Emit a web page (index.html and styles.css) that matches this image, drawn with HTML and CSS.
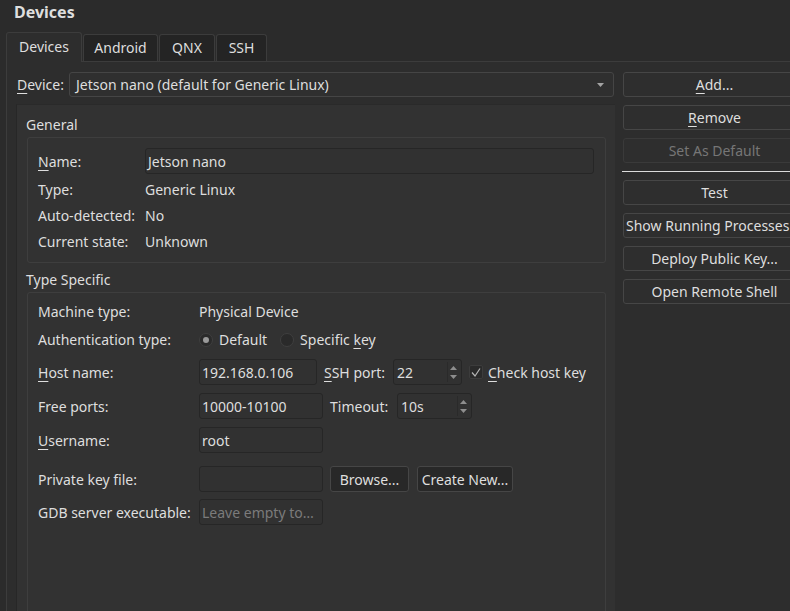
FILE: index.html
```html
<!DOCTYPE html>
<html>
<head>
<meta charset="utf-8">
<title>Devices</title>
<link rel="stylesheet" href="styles.css">
</head>
<body>
<div class="win">
  <div class="title">Devices</div>
  <div class="tabs">
    <div class="tab active t1">Devices</div>
    <div class="tab t2">Android</div>
    <div class="tab t3">QNX</div>
    <div class="tab t4">SSH</div>
  </div>
  <div class="pane">
    <div class="left">
      <div class="devrow">
        <span class="devlabel"><u>D</u>evice:</span>
        <div class="combo">
          <span>Jetson nano (default for Generic Linux)</span>
          <svg class="carrow" width="7" height="4" viewBox="0 0 7 4"><polygon points="0,0 7,0 3.5,4" fill="#a3a3a3"/></svg>
        </div>
      </div>
      <div class="scroll">
        <div class="gtitle">General</div>
        <div class="group g1">
          <div class="row r26"><span class="lbl1"><u>N</u>ame:</span><div class="field grow">Jetson nano</div></div>
          <div class="row r20"><span class="lbl1">Type:</span><span>Generic Linux</span></div>
          <div class="row r20"><span class="lbl1">Auto-detected:</span><span>No</span></div>
          <div class="row r20"><span class="lbl1">Current state:</span><span>Unknown</span></div>
        </div>
        <div class="gtitle">Type Specific</div>
        <div class="group g2">
          <div class="row r20"><span class="lbl2">Machine type:</span><span>Physical Device</span></div>
          <div class="row r20">
            <span class="lbl2">Authentication type:</span>
            <span class="radio on"></span><span class="rtext">Default</span>
            <span class="radio"></span><span class="rtext">Specific <u>k</u>ey</span>
          </div>
          <div class="row r26 host">
            <span class="lbl2"><u>H</u>ost name:</span>
            <div class="field w118">192.168.0.106</div>
            <span class="inl ssh"><u>S</u>SH port:</span>
            <div class="spin w69"><span>22</span>
              <span class="arrows"><svg width="7" height="4" viewBox="0 0 7 4"><polygon points="0,4 7,4 3.5,0" fill="#8e8e8e"/></svg><svg width="7" height="4" viewBox="0 0 7 4"><polygon points="0,0 7,0 3.5,4" fill="#8e8e8e"/></svg></span>
            </div>
            <span class="check"><svg width="10" height="9" viewBox="0 0 10 9"><polyline points="1,4.5 4,8 9,0.5" fill="none" stroke="#b5b5b5" stroke-width="1.2"/></svg></span>
            <span class="ctext"><u>C</u>heck host key</span>
          </div>
          <div class="row r26">
            <span class="lbl2">Free ports:</span>
            <div class="field w124">10000-10100</div>
            <span class="inl tmo">Timeout:</span>
            <div class="spin w75"><span>10s</span>
              <span class="arrows"><svg width="7" height="4" viewBox="0 0 7 4"><polygon points="0,4 7,4 3.5,0" fill="#8e8e8e"/></svg><svg width="7" height="4" viewBox="0 0 7 4"><polygon points="0,0 7,0 3.5,4" fill="#8e8e8e"/></svg></span>
            </div>
          </div>
          <div class="row r26">
            <span class="lbl2"><u>U</u>sername:</span>
            <div class="field w124">root</div>
          </div>
          <div class="row r26 pk">
            <span class="lbl2">Private key file:</span>
            <div class="field w124"></div>
            <div class="btn sm browse">Browse...</div>
            <div class="btn sm create">Create New...</div>
          </div>
          <div class="row r26 gdb">
            <span class="lbl2">GDB server executable:</span>
            <div class="field w124 ph">Leave empty to…</div>
          </div>
        </div>
      </div>
    </div>
    <div class="right">
      <div class="btn"><span><u>A</u>dd...</span></div>
      <div class="btn"><span><u>R</u>emove</span></div>
      <div class="btn dis"><span>Set As Default</span></div>
      <div class="sep"></div>
      <div class="btn"><span>Test</span></div>
      <div class="btn wide"><span>Show Running Processes</span></div>
      <div class="btn"><span>Deploy Public Key...</span></div>
      <div class="btn"><span>Open Remote Shell</span></div>
    </div>
  </div>
</div>
</body>
</html>
```

FILE: styles.css
```css
* { box-sizing: border-box; }
html, body { margin: 0; padding: 0; }
body {
  background: #2b2b2b;
  color: #dedede;
  font-family: "Noto Sans", "DejaVu Sans", sans-serif;
  font-size: 14px;
  line-height: 20px;
  width: 790px;
  height: 611px;
  overflow: hidden;
}
u { text-decoration: underline; text-underline-offset: 3px; text-decoration-thickness: 1px; }
.win { width: 840px; }
.title {
  height: 32px;
  padding-left: 14px;
  font-weight: 700;
  font-size: 16px;
  line-height: 24px;
}
.tabs {
  display: flex;
  align-items: flex-end;
  height: 29px;
  margin-left: 6px;
  position: relative;
  z-index: 1;
}
.tab {
  height: 27px;
  border: 1px solid #3c3c3c;
  border-bottom: none;
  border-radius: 3px 3px 0 0;
  background: #242424;
  margin-left: 1px;
  display: flex;
  align-items: center;
  justify-content: center;
  flex: none;
}
.tab.active {
  height: 30px;
  margin-left: 0;
  margin-bottom: -1px;
  background: #2d2d2d;
  padding-bottom: 2px;
}
.t1 { width: 76px; }
.t2 { width: 75px; }
.t3 { width: 56px; }
.t4 { width: 51px; }
.pane {
  margin-left: 6px;
  border-top: 1px solid #3c3c3c;
  border-left: 1px solid #3c3c3c;
  background: #2d2d2d;
  padding: 10px 0 0 9px;
  display: flex;
  height: 560px;
}
.left { width: 599px; flex: none; }
.devrow { display: flex; height: 25px; align-items: center; }
.devlabel { width: 53px; padding-left: 1px; flex: none; }
.combo {
  flex: 1;
  margin-right: 1px;
  height: 25px;
  border: 1px solid #454545;
  border-radius: 3px;
  background: #2f2f2f;
  display: flex;
  align-items: center;
  justify-content: space-between;
  padding: 0 6px 0 6px;
}
.carrow { margin-right: 3px; }
.scroll {
  margin-top: 7px;
  background: #323232;
  border-left: 1px solid #272727;
  border-top: 1px solid #2a2a2a;
  padding: 9px 9px 0 10px;
  height: 520px;
}
.gtitle { height: 20px; margin-left: -1px; margin-bottom: 3px; padding-top: 1px; }
.group { border: 1px solid #3e3e3e; border-radius: 3px; }
.g1 {
  display: flex;
  flex-direction: column;
  gap: 6px;
  padding: 10px 11px 10px 10px;
  margin-bottom: 6px;
}
.g2 {
  display: flex;
  flex-direction: column;
  gap: 8px;
  padding: 9px 10px 0 10px;
  height: 340px;
}
.row { display: flex; align-items: center; white-space: nowrap; }
.r20 { height: 20px; }
.r26 { height: 26px; }
.r26 > span { padding-top: 2px; }
.host { margin-top: 1px; }
.pk { margin-top: 5px; }
.gdb { margin-top: -1px; }
.lbl1 { width: 107px; flex: none; }
.lbl2 { width: 161px; flex: none; }
.field {
  height: 26px;
  border: 1px solid #262626;
  border-radius: 3px;
  background: #313131;
  padding: 2px 2px 0 2px;
  display: flex;
  align-items: center;
  overflow: hidden;
}
.grow { flex: 1; }
.w118 { width: 118px; }
.w124 { width: 124px; }
.ph { color: #7b7b7b; }
.inl.ssh { margin-left: 7px; width: 69px; }
.inl.tmo { margin-left: 7px; width: 67px; }
.spin {
  height: 26px;
  border: 1px solid #262626;
  border-radius: 3px;
  background: #313131;
  padding: 0 2px 0 3px;
  display: flex;
  align-items: center;
  justify-content: space-between;
}
.spin > span:first-child { padding-top: 2px; }
.w69 { width: 69px; }
.w75 { width: 75px; }
.arrows {
  width: 12px;
  height: 20px;
  border-left: 1px solid #2a2a2a;
  display: flex;
  flex-direction: column;
  align-items: center;
  justify-content: center;
  gap: 5px;
}
.arrows svg { display: block; }
.radio {
  width: 14px;
  height: 14px;
  border-radius: 50%;
  border: 1px solid #3f3f3f;
  background: #2a2a2a;
  flex: none;
  display: flex;
  align-items: center;
  justify-content: center;
}
.radio.on::after {
  content: "";
  width: 6px;
  height: 6px;
  border-radius: 50%;
  background: #9a9a9a;
}
.rtext { margin-left: 6px; margin-right: 13px; }
.check {
  width: 14px;
  height: 14px;
  margin-left: 7px;
  border: 1px solid #3c3c3c;
  border-radius: 2px;
  background: #2a2a2a;
  display: flex;
  align-items: center;
  justify-content: center;
  flex: none;
}
.r26 > span.check { padding-top: 0; }
.ctext { margin-left: 5px; }
.right {
  margin-left: 8px;
  width: 183px;
  flex: none;
  display: flex;
  flex-direction: column;
  gap: 8px;
}
.btn {
  height: 25px;
  border: 1px solid #464646;
  border-radius: 3px;
  background: #2e2e2e;
  display: flex;
  align-items: center;
  justify-content: center;
  white-space: nowrap;
  flex: none;
  overflow: hidden;
}
.btn.wide { justify-content: flex-start; padding-left: 2px; }
.btn.dis { color: #767676; border-color: #3a3a3a; }
.sep { height: 1px; background: #dcdcdc; margin-left: -1px; flex: none; }
.btn.sm { height: 26px; background: #282828; padding-top: 2px; }
.browse { width: 79px; margin-left: 7px; }
.create { width: 96px; margin-left: 8px; }
```
